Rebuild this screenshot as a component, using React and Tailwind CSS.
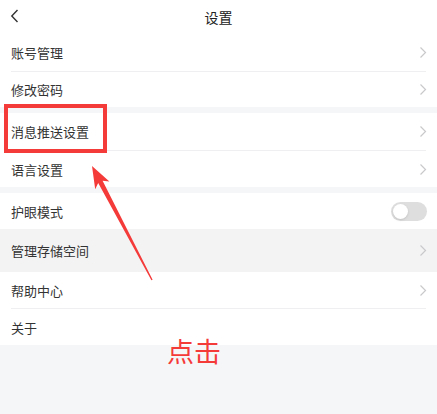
const FONT = { fontFamily: '"Noto Sans CJK SC", "Noto Sans", sans-serif' };

function Chevron() {
  return (
    <svg width="8" height="13" viewBox="0 0 8 13" className="shrink-0">
      <path d="M1.5 1.5 L6.5 6.5 L1.5 11.5" fill="none" stroke="#c9c9cc" strokeWidth="1.2" />
    </svg>
  );
}

function Row({ label, h = "h-[36px]", bg = "bg-white", right = <Chevron /> }) {
  return (
    <div className={`${h} ${bg} flex items-center justify-between pl-[11px] pr-[10px]`}>
      <span className="text-[13px] text-[#333333] leading-none">{label}</span>
      {right}
    </div>
  );
}

function Divider() {
  return (
    <div className="h-px bg-white px-[11px]">
      <div className="h-px bg-[#efeff1]" />
    </div>
  );
}

function Toggle() {
  return (
    <div className="w-[36px] h-[19px] rounded-full bg-[#dededf] p-[2px] flex items-center">
      <div className="w-[15px] h-[15px] rounded-full bg-white shadow-sm" />
    </div>
  );
}

export default function App() {
  return (
    <div className="relative w-[437px] h-[414px] bg-[#f5f6f8] overflow-hidden" style={FONT}>
      {/* header */}
      <div className="h-[34px] bg-white relative flex items-center justify-center">
        <svg width="10" height="14" viewBox="0 0 10 14" className="absolute left-[10px] top-[9px]">
          <path d="M7.5 1 L1.8 7 L7.5 13" fill="none" stroke="#333" strokeWidth="1.4" />
        </svg>
        <span className="text-[14px] text-[#222] leading-none">设置</span>
      </div>

      <Row label="账号管理" h="h-[37px]" />
      <Divider />
      <Row label="修改密码" h="h-[35px]" />

      <div className="h-[6px]" />

      <Row label="消息推送设置" h="h-[37px]" />
      <Divider />
      <Row label="语言设置" h="h-[36px]" />

      <div className="h-[6px]" />

      <Row label="护眼模式" h="h-[36px]" right={<Toggle />} />
      <Row label="管理存储空间" h="h-[43px]" bg="bg-[#f3f3f4]" />
      <Row label="帮助中心" h="h-[36px]" />
      <Divider />
      <Row label="关于" h="h-[36px]" right={null} />

      {/* annotation: red box */}
      <div className="absolute left-[4px] top-[104px] w-[103px] h-[49px] border-[4px] border-[#f53a3a]" />

      {/* annotation: arrow */}
      <svg className="absolute left-0 top-0" width="437" height="414" viewBox="0 0 437 414">
        <polygon
          points="92,166 109.4,181.6 102.6,180.7 152.6,279.7 151.4,280.3 98.2,183.1 95.2,189.2"
          fill="#f53a3a"
        />
      </svg>

      {/* annotation: text */}
      <div className="absolute left-[167px] top-[337px] text-[27px] leading-none text-[#f53a3a]">点击</div>
    </div>
  );
}
